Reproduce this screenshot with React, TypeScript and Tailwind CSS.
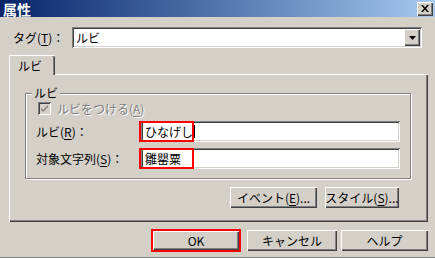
import React from 'react'

const font = { fontFamily: '"Noto Sans CJK JP", "Noto Sans", sans-serif' }

const raised =
  'bg-[#d4d0c8] shadow-[inset_1px_1px_#ffffff,inset_-1px_-1px_#404040,inset_-2px_-2px_#808080]'
const sunken =
  'bg-white shadow-[inset_1px_1px_#808080,inset_-1px_-1px_#ffffff,inset_2px_2px_#404040,inset_-2px_-2px_#d4d0c8]'

function U({ children }: { children: React.ReactNode }) {
  return <span className="underline underline-offset-2">{children}</span>
}

function Btn({ children, className = '' }: { children: React.ReactNode; className?: string }) {
  return (
    <div className={`${raised} flex items-center justify-center text-[12px] text-black leading-none ${className}`}>
      {children}
    </div>
  )
}

export default function App() {
  return (
    <div className="w-[435px] h-[258px] bg-[#d4d0c8] flex flex-col overflow-hidden border-b border-[#808080]" style={font}>
      {/* title bar */}
      <div className="h-[17px] shrink-0 flex items-center justify-between pl-[3px] pr-[2px] bg-gradient-to-r from-[#0a246a] to-[#a6caf0]">
        <span className="text-white font-bold text-[14px] leading-none">属性</span>
        <div className={`${raised} w-[16px] h-[14px] flex items-center justify-center`}>
          <svg width="8" height="7" viewBox="0 0 8 7">
            <path d="M0 0h2l2 2.5L6 0h2L5 3.5 8 7H6L4 4.5 2 7H0l3-3.5z" fill="#000" />
          </svg>
        </div>
      </div>

      {/* tag combo */}
      <div className="mt-[10px] flex items-center h-[21px]">
        <span className="ml-[13px] w-[59px] text-[12px] text-black leading-none">
          タグ(<U>T</U>)：
        </span>
        <div className={`${sunken} w-[350px] h-[21px] flex items-center justify-between pl-[4px] pr-[2px]`}>
          <span className="text-[12px] leading-none">ルビ</span>
          <div className={`${raised} w-[16px] h-[17px] flex items-center justify-center`}>
            <svg width="7" height="4" viewBox="0 0 7 4">
              <path d="M0 0h7L3.5 4z" fill="#000" />
            </svg>
          </div>
        </div>
      </div>

      {/* tab */}
      <div className="mt-[7px] ml-[9px] relative z-10 -mb-px w-[46px] h-[20px] bg-[#d4d0c8] border-t border-l border-white rounded-tl-[2px] rounded-tr-[2px] shadow-[inset_-1px_0_#404040,inset_-2px_0_#808080] flex items-center pl-[8px]">
        <span className="text-[12px] leading-none">ルビ</span>
      </div>

      {/* tab panel */}
      <div className="ml-[9px] w-[419px] h-[148px] shrink-0 border-t border-l border-white shadow-[inset_-1px_-1px_#404040,inset_-2px_-2px_#808080] flex flex-col pl-[15px] pr-[17px]">
        {/* group box */}
        <div className="mt-[18px] relative h-[86px] border border-[#808080] shadow-[1px_1px_#ffffff,inset_1px_1px_#ffffff] flex flex-col">
          <span className="absolute left-[6px] -top-[8px] bg-[#d4d0c8] px-[2px] text-[12px] leading-[14px]">ルビ</span>

          <div className="mt-[8px] ml-[12px] flex items-center gap-[6px]">
            <div className="w-[13px] h-[13px] bg-[#d4d0c8] shadow-[inset_1px_1px_#808080,inset_-1px_-1px_#ffffff,inset_2px_2px_#404040,inset_-2px_-2px_#d4d0c8] flex items-center justify-center">
              <svg width="7" height="7" viewBox="0 0 7 7">
                <path d="M0 3l2 2 5-5v2L2 7 0 5z" fill="#808080" />
              </svg>
            </div>
            <span className="text-[12px] leading-none text-[#808080] [text-shadow:1px_1px_#ffffff]">
              ルビをつける(<U>A</U>)
            </span>
          </div>

          <div className="mt-[6px] flex items-center h-[21px]">
            <span className="ml-[10px] w-[105px] text-[12px] leading-none">
              ルビ(<U>R</U>)：
            </span>
            <div className={`${sunken} relative w-[259px] h-[21px] flex items-center pl-[4px]`}>
              <div className="absolute -left-[2px] top-0 w-[55px] h-[21px] border-2 border-[#ff0000]" />
              <span className="text-[12px] leading-none">ひなげし</span>
              <span className="ml-px w-px h-[13px] bg-black" />
            </div>
          </div>

          <div className="mt-[6px] flex items-center h-[21px]">
            <span className="ml-[10px] w-[105px] text-[12px] leading-none">
              対象文字列(<U>S</U>)：
            </span>
            <div className={`${sunken} relative w-[259px] h-[21px] flex items-center pl-[4px]`}>
              <div className="absolute -left-[2px] top-0 w-[55px] h-[21px] border-2 border-[#ff0000]" />
              <span className="text-[12px] leading-none">雛罌粟</span>
            </div>
          </div>
        </div>

        {/* event / style buttons */}
        <div className="mt-[8px] flex justify-end gap-[8px] pr-[12px]">
          <Btn className="w-[87px] h-[21px]">
            イベント(<U>E</U>)...
          </Btn>
          <Btn className="w-[74px] h-[21px]">
            スタイル(<U>S</U>)...
          </Btn>
        </div>
      </div>

      {/* bottom buttons */}
      <div className="mt-[7px] flex items-center h-[23px]">
        <div className="ml-[151px] w-[90px] h-[23px] border-2 border-[#ff0000] flex">
          <Btn className="flex-1">OK</Btn>
        </div>
        <Btn className="ml-[6px] w-[90px] h-[21px]">キャンセル</Btn>
        <Btn className="ml-[4px] w-[87px] h-[21px]">ヘルプ</Btn>
      </div>
    </div>
  )
}
